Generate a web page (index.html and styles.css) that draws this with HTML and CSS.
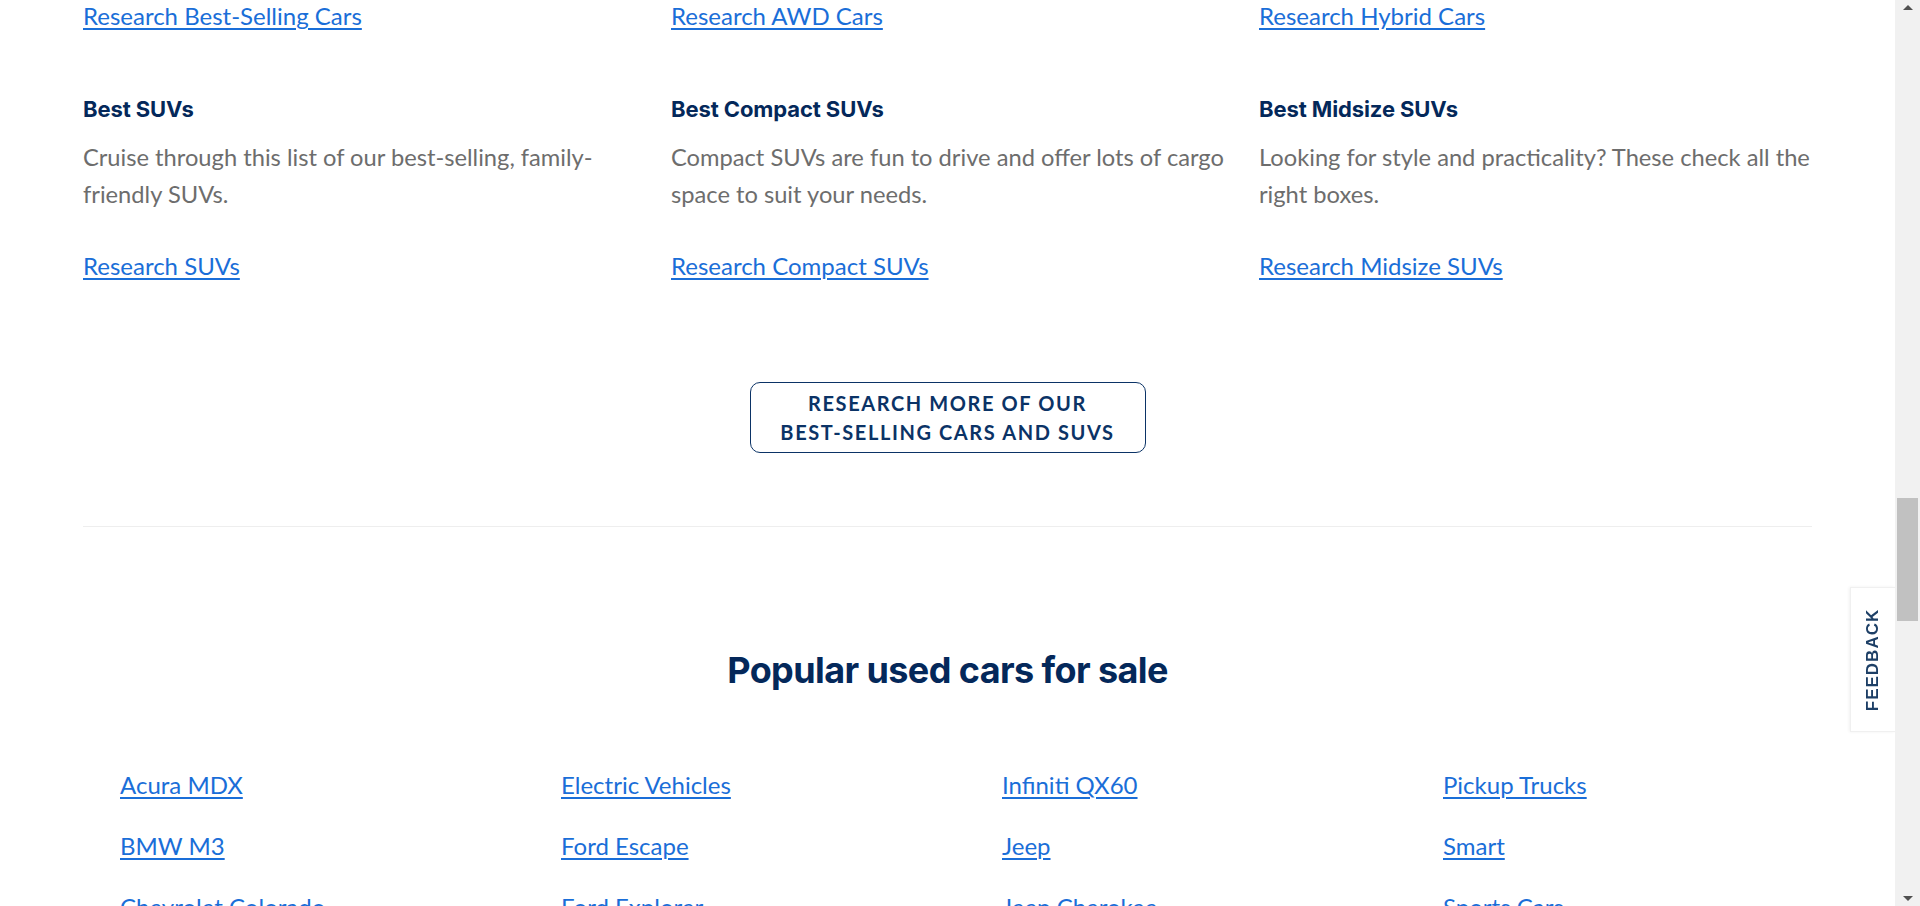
FILE: index.html
```html
<!DOCTYPE html>
<html lang="en">
<head>
<meta charset="utf-8">
<title>Research cars</title>
<link rel="stylesheet" href="styles.css">
</head>
<body>
<main class="page">
  <section class="research">
    <div class="grid3 top-links">
      <a class="link" href="#">Research Best-Selling Cars</a>
      <a class="link" href="#">Research AWD Cars</a>
      <a class="link" href="#">Research Hybrid Cars</a>
    </div>
    <div class="grid3 cards">
      <div class="card">
        <h3 class="card-title">Best SUVs</h3>
        <p class="card-text">Cruise through this list of our best-selling, family-friendly SUVs.</p>
        <a class="link" href="#">Research SUVs</a>
      </div>
      <div class="card">
        <h3 class="card-title">Best Compact SUVs</h3>
        <p class="card-text">Compact SUVs are fun to drive and offer lots of cargo space to suit your needs.</p>
        <a class="link" href="#">Research Compact SUVs</a>
      </div>
      <div class="card">
        <h3 class="card-title">Best Midsize SUVs</h3>
        <p class="card-text">Looking for style and practicality? These check all the right boxes.</p>
        <a class="link" href="#">Research Midsize SUVs</a>
      </div>
    </div>
    <div class="btn-row">
      <a class="btn-outline" href="#">Research more of our<br>best-selling cars and SUVs</a>
    </div>
  </section>
  <hr class="divider">
  <section class="popular">
    <h2 class="popular-title">Popular used cars for sale</h2>
    <div class="grid4">
      <a class="link" href="#">Acura MDX</a>
      <a class="link" href="#">Electric Vehicles</a>
      <a class="link" href="#">Infiniti QX60</a>
      <a class="link" href="#">Pickup Trucks</a>
      <a class="link" href="#">BMW M3</a>
      <a class="link" href="#">Ford Escape</a>
      <a class="link" href="#">Jeep</a>
      <a class="link" href="#">Smart</a>
      <a class="link" href="#">Chevrolet Colorado</a>
      <a class="link" href="#">Ford Explorer</a>
      <a class="link" href="#">Jeep Cherokee</a>
      <a class="link" href="#">Sports Cars</a>
    </div>
  </section>
</main>
<button class="feedback" type="button"><span class="feedback-label">FEEDBACK</span></button>
<div class="scrollbar">
  <span class="sb-arrow sb-up"></span>
  <span class="sb-thumb"></span>
  <span class="sb-arrow sb-down"></span>
</div>
</body>
</html>
```
FILE: styles.css
```css
* { box-sizing: border-box; }
html, body { margin: 0; padding: 0; height: 100%; overflow: hidden; background: #fff; }
body { font-family: Lato, "Liberation Sans", sans-serif; color: #6d6d6d; }

.page { width: 1895px; padding: 0 83px 0 83px; }

.grid3 {
  display: grid;
  grid-template-columns: repeat(3, 570px);
  column-gap: 18px;
}

.link {
  font-family: Lato, sans-serif;
  font-size: 24px;
  line-height: 32px;
  color: #1a6ed8;
  text-decoration: underline;
  text-decoration-thickness: 2px;
  text-underline-offset: 3px;
  justify-self: start;
}

.top-links { height: 32px; }

.cards { margin-top: 63px; }
.card { display: flex; flex-direction: column; align-items: flex-start; }
.card-title {
  margin: 0;
  font-family: Inter, sans-serif;
  font-weight: 700;
  font-size: 22px;
  line-height: 28px;
  letter-spacing: -0.1px;
  color: #04285a;
}
.card-text {
  margin: 16px 0 38px;
  font-size: 23.7px;
  line-height: 36.5px;
  color: #6d6d6d;
}

.btn-row { display: flex; justify-content: center; margin-top: 100px; }
.btn-outline {
  display: block;
  width: 396px;
  height: 71px;
  padding-top: 6px;
  border: 1px solid #0b3366;
  border-radius: 10px;
  text-align: center;
  text-decoration: none;
  text-transform: uppercase;
  font-family: Lato, sans-serif;
  font-weight: 700;
  font-size: 20px;
  line-height: 29px;
  letter-spacing: 1.6px;
  color: #0b3366;
}

.divider {
  margin: 73px 0 0;
  border: 0;
  border-top: 1.5px solid #eeeeee;
}

.popular-title {
  margin: 121px 0 0;
  text-align: center;
  font-family: Inter, sans-serif;
  font-weight: 700;
  font-size: 36px;
  line-height: 44px;
  letter-spacing: -0.6px;
  color: #04285a;
}

.grid4 {
  display: grid;
  grid-template-columns: repeat(4, 1fr);
  column-gap: 109px;
  row-gap: 29px;
  padding: 0 37px 0 37px;
  margin-top: 77px;
}

.feedback {
  position: fixed;
  right: 25px;
  top: 587px;
  width: 45px;
  height: 145px;
  padding: 0;
  background: #fff;
  border: 1px solid #f0f0f0;
  border-right: 0;
  box-shadow: -1px 0 3px rgba(0,0,0,0.06);
  display: flex;
  align-items: center;
  justify-content: center;
  cursor: pointer;
}
.feedback-label {
  display: block;
  transform: rotate(-90deg);
  font-family: "Liberation Sans", Arial, sans-serif;
  font-weight: 700;
  font-size: 17px;
  letter-spacing: 1px;
  color: #1d3f66;
  white-space: nowrap;
}

.scrollbar {
  position: fixed;
  top: 0;
  right: 0;
  width: 25px;
  height: 906px;
  background: #f1f1f1;
}
.sb-thumb {
  position: absolute;
  left: 2px;
  right: 2px;
  top: 498px;
  height: 123px;
  background: #c1c1c1;
}
.sb-arrow {
  position: absolute;
  left: 8px;
  width: 0;
  height: 0;
  border-left: 5px solid transparent;
  border-right: 5px solid transparent;
}
.sb-up { top: 5px; border-bottom: 5px solid #505050; }
.sb-down { bottom: 5px; border-top: 5px solid #505050; }
```
